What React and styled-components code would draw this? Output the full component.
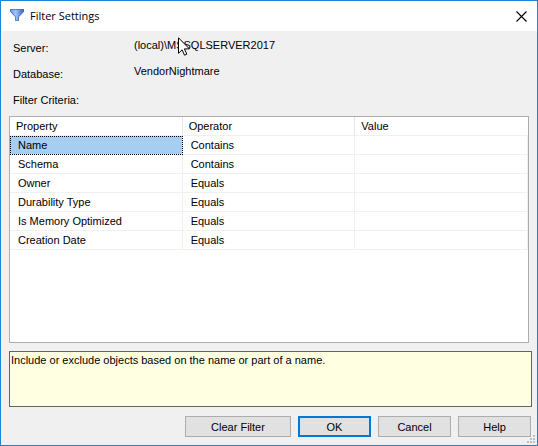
import styled, { createGlobalStyle } from "styled-components"

const GlobalStyle = createGlobalStyle`
  * {
    box-sizing: border-box;
  }

  body {
    margin: 0;
    color: #000;
    font-family: "Liberation Sans", Arial, sans-serif;
    font-size: 11px;
    line-height: 14px;
  }
`

const Dialog = styled.main`
  display: flex;
  flex-direction: column;
  min-height: 100vh;
  position: relative;
  background: #f0f0f0;
  border: 1px solid #1883d7;
`

const TitleBar = styled.header`
  display: flex;
  align-items: center;
  gap: 5px;
  height: 30px;
  padding: 0 10px 0 8px;
  background: #fff;
`

const Title = styled.h1`
  flex: 1;
  margin: 0;
  font-family: "Open Sans", "Noto Sans", sans-serif;
  font-size: 11px;
  font-weight: 400;
  line-height: 16px;
`

const CloseButton = styled.button`
  display: flex;
  padding: 0;
  border: 0;
  background: none;
`

const Content = styled.div`
  flex: 1;
  display: flex;
  flex-direction: column;
  padding: 6px 5px 8px 8px;
`

const Details = styled.dl`
  margin: 0;
`

const Detail = styled.div`
  display: grid;
  grid-template-columns: 121px 1fr;
  height: 26px;
  padding-left: 4px;
`

const Label = styled.dt`
  padding-top: 4px;
`

const Value = styled.dd`
  margin: 0;
  padding-top: 1px;
`

const Heading = styled.h2`
  margin: 0;
  padding: 4px 4px 9px;
  font-size: 11px;
  font-weight: 400;
`

const GridBox = styled.div`
  flex: 1;
  margin-right: 3px;
  background: #fff;
  border: 1px solid #abadb3;
`

const Table = styled.table`
  width: 100%;
  table-layout: fixed;
  border-collapse: separate;
  border-spacing: 0;
`

const HeadCell = styled.th`
  height: 19px;
  padding: 0 6px;
  border-right: 1px solid #e5e5e5;
  border-bottom: 1px solid #f0f0f0;
  font-weight: 400;
  text-align: left;

  &:last-child {
    border-right-color: #fff;
  }
`

const Cell = styled.td`
  height: 19px;
  padding: 0 8px;
  border-right: 1px solid #f0f0f0;
  border-bottom: 1px solid #f0f0f0;
  background: ${({ $selected }) => ($selected ? "#a5cef0" : "#fff")};
  outline: ${({ $selected }) => ($selected ? "1px dotted #000" : "none")};
  outline-offset: -1px;
`

const Description = styled.p`
  height: 56px;
  margin: 8px 0 0;
  padding: 1px;
  background: #ffffe1;
  border: 1px solid #646464;
`

const Footer = styled.footer`
  display: flex;
  justify-content: flex-end;
  gap: 7px;
  padding: 9px 1px 0 0;
`

const Button = styled.button`
  width: ${({ $wide }) => ($wide ? "106px" : "73px")};
  height: 21px;
  padding: 0;
  background: #e1e1e1;
  border: ${({ $primary }) => ($primary ? "2px solid #0078d7" : "1px solid #adadad")};
  color: #000;
  font: inherit;
`

const Grip = styled.svg`
  position: absolute;
  right: 2px;
  bottom: 2px;
`

const Pointer = styled.svg`
  position: absolute;
  top: 36px;
  left: 177px;
`

const criteria = [
  { property: "Name", operator: "Contains" },
  { property: "Schema", operator: "Contains" },
  { property: "Owner", operator: "Equals" },
  { property: "Durability Type", operator: "Equals" },
  { property: "Is Memory Optimized", operator: "Equals" },
  { property: "Creation Date", operator: "Equals" },
]

function FilterIcon() {
  return (
    <svg width="16" height="16" viewBox="0 0 16 16" aria-hidden="true">
      <defs>
        <linearGradient id="funnel" x1="0" x2="1">
          <stop offset="0" stopColor="#5b8de0" />
          <stop offset="0.4" stopColor="#a3c6f6" />
          <stop offset="1" stopColor="#2c5cc0" />
        </linearGradient>
      </defs>
      <path d="M1 1h14v2.5L10 9v4H6V9L1 3.5z" fill="url(#funnel)" />
      <path d="M1.5 1.5h13v2L9.5 8.8v3.7h-3V8.8l-5-5.3z" fill="none" stroke="#3f6cc4" strokeOpacity="0.7" />
    </svg>
  )
}

function App() {
  return (
    <Dialog>
      <GlobalStyle />
      <TitleBar>
        <FilterIcon />
        <Title>Filter Settings</Title>
        <CloseButton type="button" aria-label="Close">
          <svg width="11" height="11" viewBox="0 0 11 11" aria-hidden="true">
            <path d="M.5.5l10 10M10.5.5l-10 10" stroke="#000" strokeWidth="1.1" />
          </svg>
        </CloseButton>
      </TitleBar>

      <Content>
        <Details>
          <Detail>
            <Label>Server:</Label>
            <Value>(local)\MSSQLSERVER2017</Value>
          </Detail>
          <Detail>
            <Label>Database:</Label>
            <Value>VendorNightmare</Value>
          </Detail>
        </Details>
        <Heading id="criteria">Filter Criteria:</Heading>

        <GridBox>
          <Table aria-labelledby="criteria">
            <thead>
              <tr>
                <HeadCell>Property</HeadCell>
                <HeadCell>Operator</HeadCell>
                <HeadCell>Value</HeadCell>
              </tr>
            </thead>
            <tbody>
              {criteria.map(({ property, operator }, index) => (
                <tr key={property}>
                  <Cell $selected={index === 0}>{property}</Cell>
                  <Cell>{operator}</Cell>
                  <Cell />
                </tr>
              ))}
            </tbody>
          </Table>
        </GridBox>

        <Description>Include or exclude objects based on the name or part of a name.</Description>

        <Footer>
          <Button type="button" $wide>Clear Filter</Button>
          <Button type="button" $primary>OK</Button>
          <Button type="button">Cancel</Button>
          <Button type="button">Help</Button>
        </Footer>
      </Content>

      <Grip width="8" height="8" viewBox="0 0 8 8" fill="#bfbfbf" aria-hidden="true">
        <path d="M6 0h2v2H6zM3 3h2v2H3zM6 3h2v2H6zM0 6h2v2H0zM3 6h2v2H3zM6 6h2v2H6z" />
      </Grip>
      <Pointer width="12" height="19" viewBox="0 0 12 19" aria-hidden="true">
        <path
          d="M.5.8v15.5l3.6-3.5 2.4 5.4 2.3-1-2.4-5.3h5z"
          fill="#fff"
          stroke="#000"
        />
      </Pointer>
    </Dialog>
  )
}

export default App
